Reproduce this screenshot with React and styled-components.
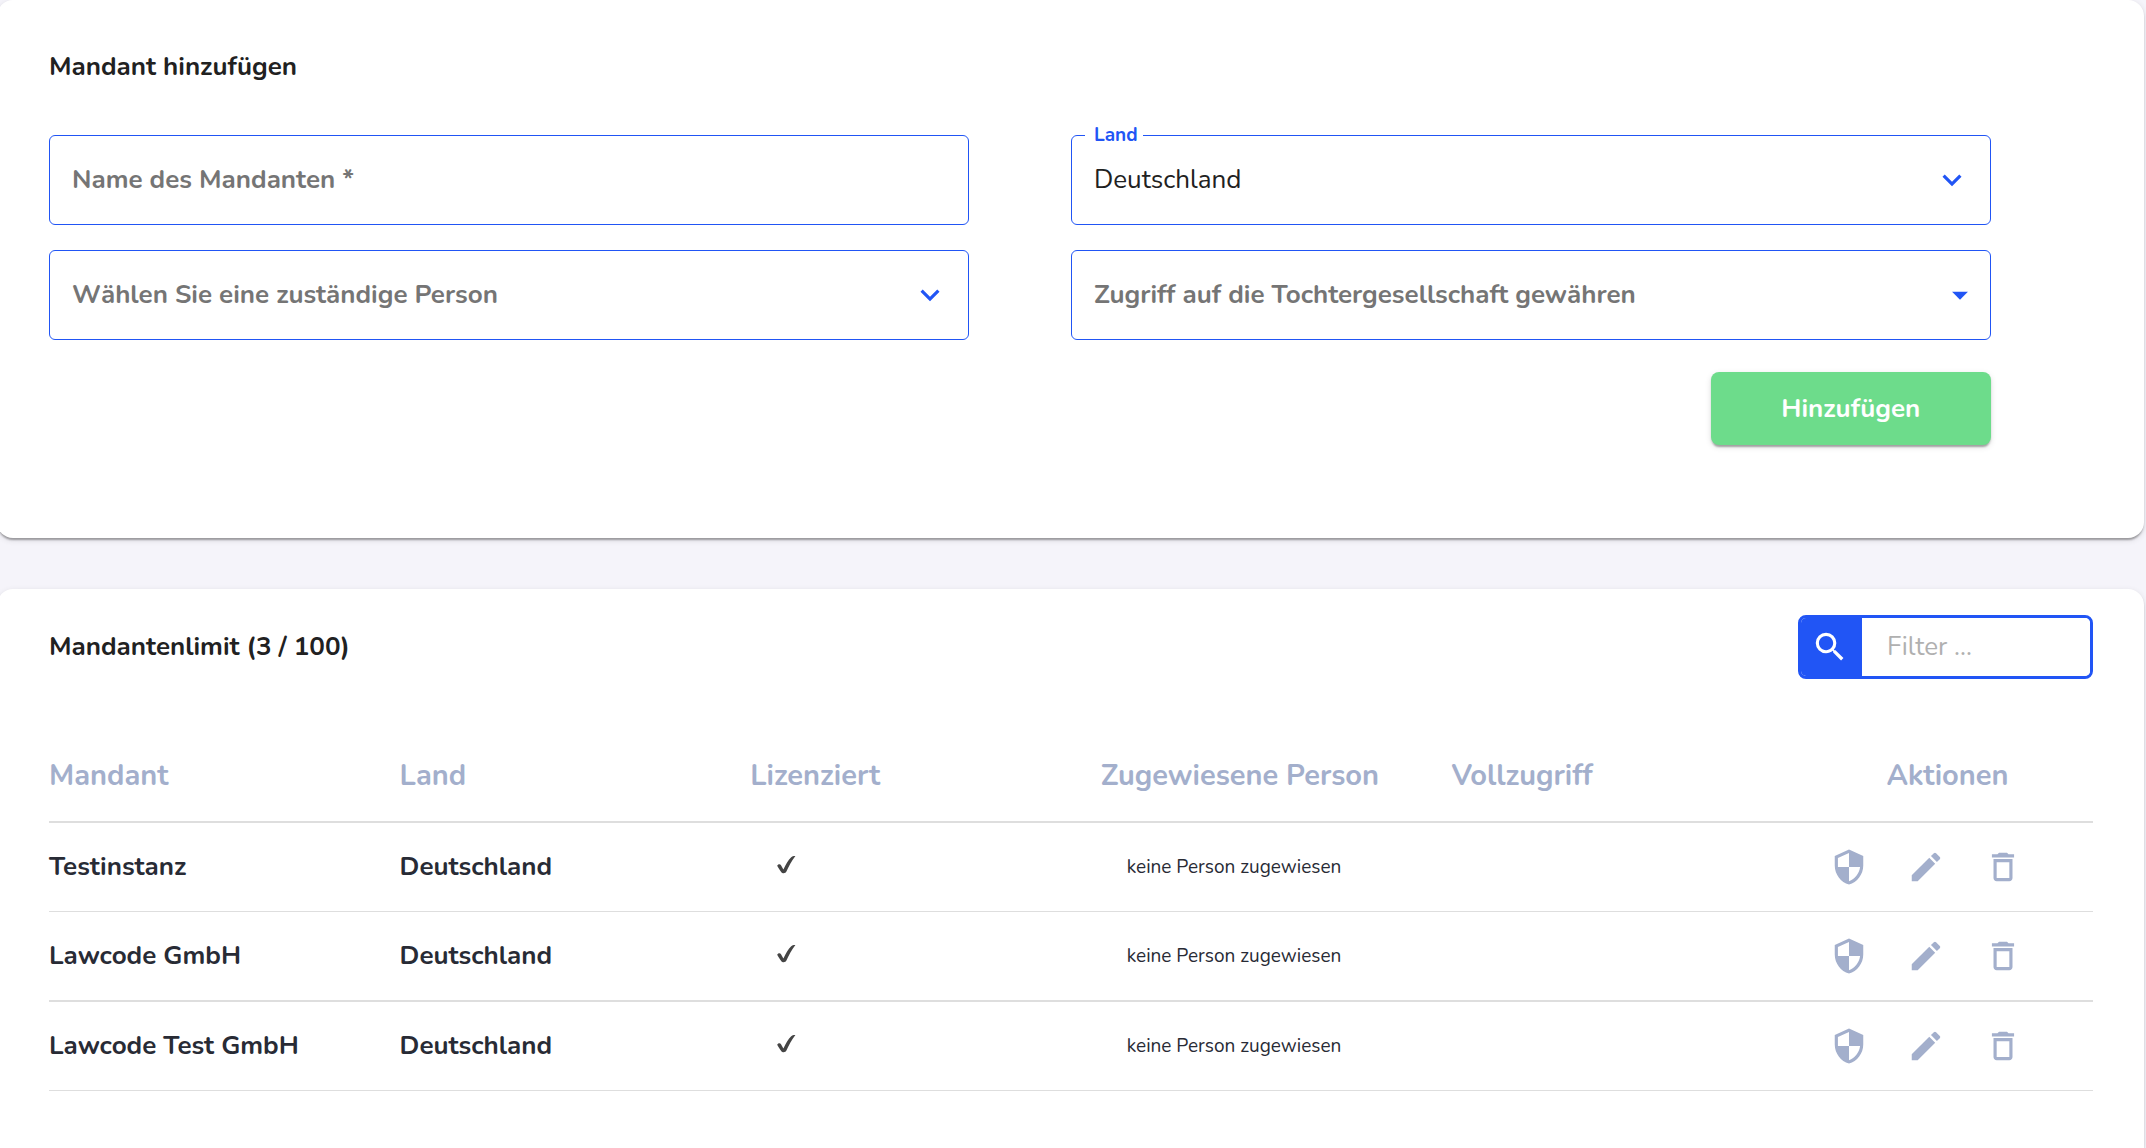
import React, { useState } from 'react'
import styled, { createGlobalStyle } from 'styled-components'
import {
    MdArrowDropDown,
    MdDeleteOutline,
    MdEdit,
    MdExpandMore,
    MdSearch,
    MdSecurity,
} from 'react-icons/md'

const blue = '#2155f5'
const muted = '#a3afcc'
const elevation = `
    0 4px 2px -2px rgba(0, 0, 0, 0.2),
    0 2px 2px 0 rgba(0, 0, 0, 0.14),
    0 2px 6px 0 rgba(0, 0, 0, 0.12)
`

const GlobalStyle = createGlobalStyle`
    * {
        box-sizing: border-box;
    }
    body {
        margin: 0;
        background: #f5f4fa;
        color: #212121;
        font-family: Nunito, Lato, sans-serif;
        font-size: 26px;
        line-height: 32px;
    }
    button, input, select {
        font: inherit;
    }
`

// Page and cards

const Page = styled.main`
    display: flex;
    flex-direction: column;
    gap: 51px;
    min-height: 100vh;
    margin: 0 2px 0 -3px;
`

const Card = styled.section`
    background: #fff;
    border-radius: ${props => props.$open ? '16px 16px 0 0' : '16px'};
    box-shadow: ${elevation};
    flex-grow: ${props => props.$open ? 1 : 0};
    padding: ${props => props.$open ? '26px 51px 56px 52px' : '51px 51px 93px 52px'};
`

const Title = styled.h2`
    margin: 0;
    font-size: 26px;
    line-height: 32px;
    font-weight: 700;
`

// Form

const Form = styled.form`
    display: grid;
    grid-template-columns: 45% 45%;
    column-gap: 5%;
    row-gap: 25px;
    margin-top: 52px;
`

const Field = styled.div`
    position: relative;
    display: flex;
    height: 90px;
    border: 1px solid ${blue};
    border-radius: 6px;
`

const FieldLabel = styled.label`
    position: absolute;
    top: -14px;
    left: 13px;
    padding: 0 5px 0 9px;
    background: #fff;
    color: ${blue};
    font-size: 19px;
    line-height: 26px;
    font-weight: 700;
`

const TextInput = styled.input`
    flex: 1;
    min-width: 0;
    padding: 0 22px;
    border: 0;
    outline: 0;
    background: transparent;
    &::placeholder {
        color: #757575;
        font-weight: 700;
        opacity: 1;
    }
`

const Select = styled.select`
    appearance: none;
    flex: 1;
    min-width: 0;
    padding: 0 60px 0 22px;
    border: 0;
    outline: 0;
    background: transparent;
    color: ${props => props.$empty ? '#757575' : '#212121'};
    font-weight: ${props => props.$empty ? 700 : 400};
`

const SelectIcon = styled.span`
    position: absolute;
    top: 0;
    bottom: 0;
    right: ${props => props.$edge ? '11px' : '19px'};
    display: flex;
    align-items: center;
    color: ${blue};
    pointer-events: none;
`

const SubmitRow = styled.div`
    grid-column: 1 / -1;
    display: flex;
    justify-content: flex-end;
    padding-top: 7px;
`

const SubmitButton = styled.button`
    width: 280px;
    height: 73px;
    border: 0;
    border-radius: 8px;
    background: #6ddc8b;
    box-shadow: ${elevation};
    color: #fff;
    font-weight: 700;
    cursor: pointer;
`

// List header with filter

const ListHeader = styled.div`
    display: flex;
    align-items: center;
    justify-content: space-between;
`

const Filter = styled.label`
    display: flex;
    width: 295px;
    height: 64px;
    border: 3px solid ${blue};
    border-radius: 8px;
    overflow: hidden;
`

const FilterIcon = styled.span`
    display: flex;
    align-items: center;
    justify-content: center;
    width: 61px;
    padding-right: 3px;
    background: ${blue};
    color: #fff;
`

const FilterInput = styled.input`
    flex: 1;
    min-width: 0;
    padding: 0 25px;
    border: 0;
    outline: 0;
    &::placeholder {
        color: #b0b0b0;
        opacity: 1;
    }
`

// Table

const Table = styled.table`
    width: 100%;
    margin-top: 49px;
    table-layout: fixed;
    border-collapse: separate;
    border-spacing: 0;
`

const HeadCell = styled.th`
    height: 95px;
    padding: 2px 0 0;
    border-bottom: 2px solid #dedede;
    color: ${muted};
    font-size: 29px;
    line-height: 36px;
    font-weight: 700;
    text-align: ${props => props.$center ? 'center' : 'left'};
    width: ${props => props.$center ? '291px' : 'auto'};
`

const Row = styled.tr`
    height: 89px;
    &:nth-child(even) {
        height: 90px;
    }
    &:nth-child(even) > td {
        border-bottom-width: 2px;
    }
`

const Cell = styled.td`
    padding: 0;
    border-bottom: 1px solid #dedede;
    color: #282b35;
    font-weight: 700;
`

const InsetCell = styled(Cell)`
    padding-left: 26px;
    font-size: 19px;
    font-weight: 400;
`

const CheckIcon = styled.svg`
    display: block;
    width: 20px;
    height: 24px;
`

const Actions = styled.div`
    display: flex;
    justify-content: center;
    padding-right: 44px;
`

const ActionButton = styled.button`
    display: flex;
    justify-content: center;
    width: 77px;
    padding: 0;
    border: 0;
    background: none;
    color: ${muted};
    cursor: pointer;
`

const Check = () => (
    <CheckIcon viewBox="0 0 20 24" role="img" aria-label="Lizenziert">
        <path
            d="M1.2 10.8C1.6 9.2 4.2 8.6 5 10.2L7.4 14.6C9.6 9.6 12.4 4.8 15.2 2.2C16.2 1.2 17.8 .9 19.4 1C15.6 6 13 11 10.4 16.6C9.6 18.6 6.4 18.8 5.4 17.2C3.6 14.8 2.2 12.8 1.2 10.8Z"
            fill="#444"
        />
    </CheckIcon>
)

const clients = [
    { name: 'Testinstanz', country: 'Deutschland' },
    { name: 'Lawcode GmbH', country: 'Deutschland' },
    { name: 'Lawcode Test GmbH', country: 'Deutschland' },
]

const AddClient = () => (
    <Card>
        <Title>Mandant hinzufügen</Title>
        <Form onSubmit={e => e.preventDefault()}>
            <Field>
                <TextInput aria-label="Name des Mandanten" placeholder="Name des Mandanten *" />
            </Field>
            <Field>
                <FieldLabel htmlFor="country">Land</FieldLabel>
                <Select id="country">
                    <option>Deutschland</option>
                </Select>
                <SelectIcon><MdExpandMore size={38} /></SelectIcon>
            </Field>
            <Field>
                <Select $empty aria-label="Zuständige Person">
                    <option>Wählen Sie eine zuständige Person</option>
                </Select>
                <SelectIcon><MdExpandMore size={38} /></SelectIcon>
            </Field>
            <Field>
                <Select $empty aria-label="Zugriff">
                    <option>Zugriff auf die Tochtergesellschaft gewähren</option>
                </Select>
                <SelectIcon $edge><MdArrowDropDown size={38} /></SelectIcon>
            </Field>
            <SubmitRow>
                <SubmitButton type="submit">Hinzufügen</SubmitButton>
            </SubmitRow>
        </Form>
    </Card>
)

const ClientList = () => {
    const [filter, setFilter] = useState('')
    const visible = clients.filter(c => c.name.toLowerCase().includes(filter.toLowerCase()))

    return (
        <Card $open>
            <ListHeader>
                <Title>Mandantenlimit (3 / 100)</Title>
                <Filter>
                    <FilterIcon><MdSearch size={38} /></FilterIcon>
                    <FilterInput
                        aria-label="Filter"
                        placeholder="Filter ..."
                        value={filter}
                        onChange={e => setFilter(e.target.value)}
                    />
                </Filter>
            </ListHeader>
            <Table>
                <thead>
                    <tr>
                        <HeadCell>Mandant</HeadCell>
                        <HeadCell>Land</HeadCell>
                        <HeadCell>Lizenziert</HeadCell>
                        <HeadCell>Zugewiesene Person</HeadCell>
                        <HeadCell>Vollzugriff</HeadCell>
                        <HeadCell $center>Aktionen</HeadCell>
                    </tr>
                </thead>
                <tbody>
                    {visible.map(client => (
                        <Row key={client.name}>
                            <Cell>{client.name}</Cell>
                            <Cell>{client.country}</Cell>
                            <InsetCell><Check /></InsetCell>
                            <InsetCell>keine Person zugewiesen</InsetCell>
                            <Cell />
                            <Cell>
                                <Actions>
                                    <ActionButton aria-label="Rechte"><MdSecurity size={38} /></ActionButton>
                                    <ActionButton aria-label="Bearbeiten"><MdEdit size={38} /></ActionButton>
                                    <ActionButton aria-label="Löschen"><MdDeleteOutline size={38} /></ActionButton>
                                </Actions>
                            </Cell>
                        </Row>
                    ))}
                </tbody>
            </Table>
        </Card>
    )
}

const App = () => (
    <>
        <GlobalStyle />
        <Page>
            <AddClient />
            <ClientList />
        </Page>
    </>
)

export default App
